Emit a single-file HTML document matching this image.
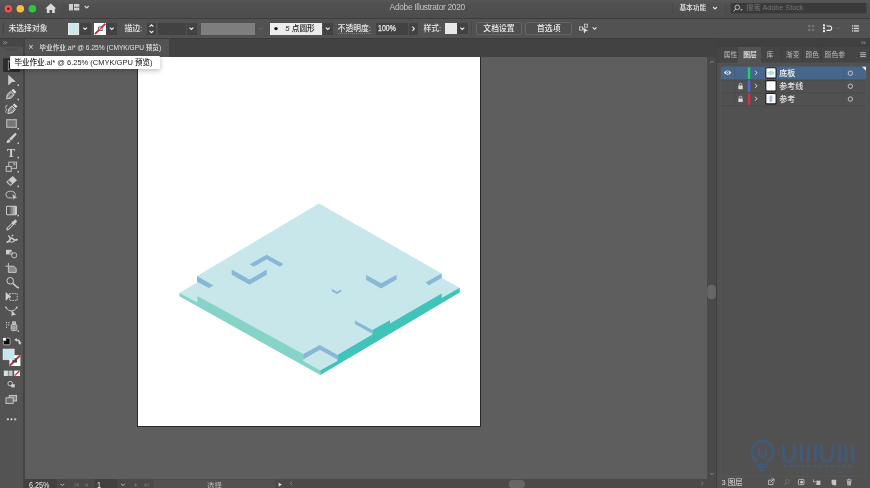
<!DOCTYPE html>
<html lang="zh-CN">
<head>
<meta charset="utf-8">
<title>Adobe Illustrator 2020</title>
<style>
html,body{margin:0;padding:0}
body{width:870px;height:488px;overflow:hidden;position:relative;background:#5e5e5e;
 font-family:"Liberation Sans","Noto Sans CJK SC",sans-serif;font-size:8px;line-height:10px;color:#dcdcdc}
div,span{position:absolute;box-sizing:border-box;white-space:nowrap}
svg{position:absolute;left:0;top:0;overflow:visible;filter:blur(0.35px)}
span{filter:blur(0.3px)}
#titlebar{left:0;top:0;width:870px;height:18px;background:linear-gradient(#575757,#505050 30%,#4d4d4d)}
#ctrlbar{left:0;top:17.8px;width:870px;height:21.4px;background:#525252;border-top:1px solid #3d3d3d;border-bottom:1px solid #3c3c3c}
#tabbar{left:0;top:39px;width:718px;height:17.9px;background:#424242}
#doctab{left:25px;top:39.4px;width:143.6px;height:17.5px;background:#535353}
#toolbar{left:0;top:39px;width:25px;height:449px;background:#535353;border-right:2px solid #434343}
#canvas{left:25px;top:56.9px;width:682px;height:422.1px;background:#5e5e5e}
#artboard{left:137.2px;top:56.9px;width:343.8px;height:369.8px;background:#fff;border:1.2px solid #2a2a2a;border-top:none;border-left-width:0.7px}
#vscroll{left:707px;top:56.9px;width:10px;height:422.1px;background:#4a4a4a}
#hbar{left:25px;top:479px;width:692px;height:9px;background:#4a4a4a}
#panel{left:716.3px;top:39px;width:153.7px;height:449px;background:#515151;border-left:1.9px solid #404040}
#phead{left:717px;top:39px;width:153px;height:7.6px;background:#404040}
#ptabs{left:717px;top:46.6px;width:153px;height:16px;background:#454545}
#ptabact{left:738.2px;top:46.6px;width:23px;height:16px;background:#535353}
.t{color:#e6e6e6;font-weight:500}
.dim{color:#9a9a9a}
.box{background:#424242}
.row{left:721px;width:145px;height:13px}
</style>
</head>
<body>
<div id="canvas"></div>
<div id="artboard"></div>
<div id="vscroll"></div>
<div id="hbar"></div>
<div id="titlebar"></div>
<div id="ctrlbar"></div>
<div id="tabbar"></div>
<div id="doctab"></div>
<div id="toolbar"></div>
<div id="panel"></div>
<div id="phead"></div>
<div id="ptabs"></div>
<div id="ptabact"></div>

<!-- artwork -->
<svg id="art" width="870" height="488" viewBox="0 0 870 488">
 <polygon fill="#c7e7eb" points="319,203.6 441.7,273.4 441.7,278 459.7,287.8 320.3,372 179.4,292.9 197,282.6 197,276"/>
 <polygon fill="#86d4c7" points="179.4,292.9 197.4,302.5 197.4,296.1 303.2,353.9 303.2,361 320.3,370.5 320.3,375.1 179.4,296.3"/>
 <polygon fill="#40c3b8" points="320.3,370.5 337.4,361 337.4,355 372.4,334.5 372.4,330.1 390,320.3 390,323.4 441.7,293.6 441.7,298 459.7,287.8 459.7,292.4 320.3,375.1"/>
 <g fill="#8bb7d7">
  <polygon points="197,276 213.4,285.5 208.9,288 197,281.8"/>
  <polygon points="249.7,264.3 266.6,254.7 283.5,264 279.9,266.7 266.6,259.3 253.8,266.7"/>
  <polygon points="231.7,269.6 249.5,279.6 266.8,269.6 266.8,274.7 249.5,284.7 231.7,274.7"/>
  <polygon points="331.7,289.1 336.9,291.8 341.3,289.5 341.3,291.5 336.9,294 331.7,291.2"/>
  <polygon points="366.2,275.1 381.2,283.3 396.6,274.8 396.6,279.4 381.2,288.4 366.2,279.9"/>
  <polygon points="441.7,273.4 441.7,278 429,285.2 425.4,282.6"/>
  <polygon points="354.9,320.6 372.4,330.1 372.4,334 371.5,333.2 354.9,324"/>
  <polygon points="303.2,353.9 319.8,345 337.4,354.8 337.4,359.4 319.8,349.8 303.2,359.4"/>
 </g>
</svg>

<!-- title bar -->
<svg width="870" height="18" viewBox="0 0 870 18">
 <circle cx="8.3" cy="8.7" r="3.8" fill="#f25056"/><circle cx="8.3" cy="8.7" r="1.3" fill="#7a0c10"/>
 <circle cx="20.3" cy="8.7" r="3.8" fill="#fbbd2e"/>
 <circle cx="32.4" cy="8.7" r="3.8" fill="#2bc840"/>
 <path d="M50.8 3.5 L56.3 8.6 H54.8 V12.9 H52.1 V10 H49.5 V12.9 H46.8 V8.6 H45.3 Z" fill="#dadada"/>
 <rect x="63.6" y="3" width="0.8" height="11" fill="#444" opacity="0.6"/>
 <g fill="#cfcfcf"><rect x="69" y="4" width="4" height="6.4"/><rect x="74" y="4" width="5.3" height="2.8"/><rect x="74" y="7.6" width="5.3" height="2.8"/></g>
 <path d="M84.7 6 L86.7 8 L88.7 6" fill="none" stroke="#d8d8d8" stroke-width="1.15"/>
 <rect x="672" y="3" width="0.8" height="11" fill="#444" opacity="0.6"/>
 <path d="M713 7 L715 9 L717 7" fill="none" stroke="#e0e0e0" stroke-width="1.1"/>
 <rect x="725.4" y="3" width="0.8" height="11" fill="#444" opacity="0.7"/>
 <rect x="730.7" y="3" width="135.7" height="10.4" fill="#3a3a3a"/>
 <circle cx="737.3" cy="7.3" r="2.3" fill="none" stroke="#c8c8c8" stroke-width="0.9"/>
 <path d="M735.7 9 L733.6 11.3" stroke="#c8c8c8" stroke-width="1"/>
 <path d="M740.2 9.2 h2.6 l-1.3 1.5 z" fill="#c8c8c8"/>
</svg>
<span id="title" style="left:389.6px;top:2.2px;color:#c4c4c4;font-size:8.4px;letter-spacing:-0.3px">Adobe Illustrator 2020</span>
<span id="basic" class="t" style="left:679.4px;top:2.6px;font-size:6.7px">基本功能</span>
<span id="search" style="left:746.2px;top:3px;font-size:7.2px;color:#767676">搜索 Adobe Stock</span>

<!-- control bar -->
<span class="t" style="left:8.5px;top:24.1px;font-size:7.8px">未选择对象</span>
<div style="left:67.5px;top:23px;width:11.7px;height:11.7px;background:#c8e8ec;border:0.5px solid #e8e8e8"></div>
<div class="box" style="left:79.6px;top:23px;width:11px;height:11.7px"></div>
<div style="left:94.2px;top:23px;width:11.7px;height:11.7px;background:#fff"></div>
<div class="box" style="left:106.3px;top:23px;width:11px;height:11.7px"></div>
<span class="t" style="left:124.5px;top:24.1px;font-size:7.8px">描边:</span>
<div class="box" style="left:147.2px;top:23px;width:9px;height:11.7px"></div>
<div class="box" style="left:157.6px;top:23px;width:28.3px;height:11.7px"></div>
<div class="box" style="left:186.6px;top:23px;width:10px;height:11.7px"></div>
<div style="left:200.6px;top:23px;width:54.4px;height:11.7px;background:#7e7e7e"></div>
<div style="left:270.1px;top:23px;width:52.1px;height:11.5px;background:#ececec"></div>
<div class="box" style="left:322.6px;top:23px;width:10.4px;height:11.5px"></div>
<span style="left:285.3px;top:24.1px;font-size:7.7px;color:#1c1c1c;font-weight:500"><i>5</i> 点圆形</span>
<span class="t" style="left:337.6px;top:24.1px;font-size:7.8px;border-bottom:0.5px dotted #7a7a7a;height:10.4px">不透明度:</span>
<div class="box" style="left:375.9px;top:23px;width:32.1px;height:11.7px"></div>
<span class="t" style="left:378.1px;top:23.2px;font-size:9px;transform:scaleX(0.775);transform-origin:0 0;color:#f0f0f0;-webkit-text-stroke:0.25px #f0f0f0">100%</span>
<div class="box" style="left:408.6px;top:23px;width:9.6px;height:11.7px"></div>
<span class="t" style="left:423.4px;top:24.1px;font-size:7.8px">样式:</span>
<div style="left:444.6px;top:23px;width:12px;height:11.4px;background:#e8e8e8"></div>
<div class="box" style="left:457px;top:23px;width:10.5px;height:11.4px"></div>
<div style="left:475.6px;top:21.8px;width:46.7px;height:13.4px;border:1px solid #656565;border-radius:2px;background:#4f4f4f"></div>
<div style="left:525.2px;top:21.8px;width:47.2px;height:13.4px;border:1px solid #656565;border-radius:2px;background:#4f4f4f"></div>
<span class="t" style="left:475.6px;top:23.8px;width:46.7px;text-align:center;font-size:7.8px;font-weight:500;color:#ececec">文档设置</span>
<span class="t" style="left:525.2px;top:23.8px;width:47.2px;text-align:center;font-size:7.8px;font-weight:500;color:#ececec">首选项</span>
<svg width="870" height="40" viewBox="0 0 870 40">
 <rect x="2.8" y="22.6" width="0.8" height="12" fill="#404040"/>
 <g fill="none" stroke="#ececec" stroke-width="1.15">
  <path d="M83.2 27.6 L85.1 29.5 L87 27.6"/>
  <path d="M109.9 27.6 L111.8 29.5 L113.7 27.6"/>
  <path d="M149.6 26.6 L151.5 24.8 L153.4 26.6"/>
  <path d="M149.6 30.8 L151.5 32.6 L153.4 30.8"/>
  <path d="M189.5 27.6 L191.4 29.5 L193.3 27.6"/>
  <path d="M325.9 27.6 L327.8 29.5 L329.7 27.6"/>
  <path d="M412.4 26.6 L414.3 28.7 L412.4 30.8"/>
  <path d="M460.4 27.6 L462.3 29.5 L464.2 27.6"/>
  <path d="M592.7 27.4 L594.6 29.3 L596.5 27.4"/>
 </g>
 <path d="M258.7 27.6 L260.6 29.5 L262.5 27.6" fill="none" stroke="#6e6e6e" stroke-width="1"/>
 <path d="M95 34 L105.2 23.8" stroke="#e0202c" stroke-width="1.7"/>
 <rect x="98.6" y="27" width="3.6" height="3.6" fill="#fff" stroke="#555" stroke-width="0.8"/>
 <path d="M95 34 L105.2 23.8" stroke="#e0202c" stroke-width="1.2" opacity="0.9"/>
 <circle cx="276" cy="28.6" r="1.7" fill="#111"/>
 <rect x="471" y="22" width="1" height="13" fill="#474747"/>
 <g fill="none" stroke="#d4d4d4" stroke-width="0.8"><rect x="584.4" y="24.2" width="3" height="3"/><rect x="579.4" y="27" width="3" height="3"/></g>
 <path d="M583 27.4 L588.2 30.8 L585.6 31.2 L584.2 33.4 Z" fill="#e0e0e0"/>
 <g fill="#747474"><rect x="808" y="24.9" width="2.3" height="2.3"/><rect x="811.9" y="24.9" width="2.3" height="2.3"/><rect x="808" y="28.8" width="2.3" height="2.3"/><rect x="811.9" y="28.8" width="2.3" height="2.3"/></g>
 <g fill="#f0f0f0"><rect x="823" y="24.3" width="2" height="2"/><rect x="823" y="27.2" width="2" height="2"/><rect x="823" y="30.1" width="2" height="2"/></g>
 <path d="M826.5 26 h3 a2.2 2.2 0 0 1 0 4.4 h-3" fill="none" stroke="#f0f0f0" stroke-width="1.1"/>
 <path d="M836.3 27.2 L838 28.9 L839.7 27.2" fill="none" stroke="#6e6e6e" stroke-width="0.9"/>
 <g fill="#d8d8d8"><rect x="852" y="25.3" width="1.3" height="1.3"/><rect x="854" y="25.3" width="5" height="1.3"/><rect x="852" y="27.8" width="1.3" height="1.3"/><rect x="854" y="27.8" width="5" height="1.3"/><rect x="852" y="30.3" width="1.3" height="1.3"/><rect x="854" y="30.3" width="5" height="1.3"/></g>
</svg>


<!-- right panel -->
<svg width="870" height="488" viewBox="0 0 870 488">
 <path d="M861.6 41.4 l1.3 1.3 l-1.3 1.3 M863.8 41.4 l1.3 1.3 l-1.3 1.3" fill="none" stroke="#b8b8b8" stroke-width="0.7"/>
 <g fill="#3e3e3e" opacity="0.7"><rect x="781" y="47" width="0.8" height="15"/><rect x="802" y="47" width="0.8" height="15"/><rect x="820.6" y="47" width="0.8" height="15"/><rect x="846.2" y="47" width="0.8" height="15"/></g>
 <g fill="#c4c4c4"><rect x="860.2" y="52.4" width="5.6" height="0.9"/><rect x="860.2" y="54.3" width="5.6" height="0.9"/><rect x="860.2" y="56.2" width="5.6" height="0.9"/></g>
 <rect x="720.6" y="63" width="146" height="413.2" fill="none" stroke="#595959" stroke-width="0.6"/>
 <rect x="154" y="479.6" width="121" height="8.4" fill="#525252"/>
 <!-- rows -->
 <rect x="721" y="66.6" width="145" height="13.1" rx="1" fill="#47678a"/>
 <rect x="721" y="79.7" width="145" height="0.6" fill="#474747"/>
 <rect x="721" y="92.6" width="145" height="0.6" fill="#474747"/>
 <rect x="721" y="105.5" width="145" height="0.6" fill="#474747"/>
 <rect x="734.6" y="66.7" width="0.6" height="39" fill="#444" opacity="0.45"/>
 <rect x="843.6" y="66.7" width="0.6" height="39" fill="#444" opacity="0.45"/>
 <!-- eye -->
 <path d="M723.8 72.6 q3.8 -4.4 7.6 0 q-3.8 4.4 -7.6 0 z" fill="#e6e6e6"/>
 <circle cx="727.6" cy="72.6" r="1.5" fill="#47678a"/><circle cx="727.6" cy="72.6" r="0.6" fill="#e6e6e6"/>
 <!-- colour bars -->
 <rect x="747.8" y="67.4" width="2.4" height="11.6" fill="#22d160"/>
 <rect x="747.8" y="80.4" width="2.4" height="11.6" fill="#4c68dc"/>
 <rect x="747.8" y="93.3" width="2.4" height="11.6" fill="#d8303a"/>
 <!-- chevrons -->
 <g fill="none" stroke="#e0e0e0" stroke-width="1">
  <path d="M755.1 70.8 l1.9 2 l-1.9 2"/><path d="M755.1 83.8 l1.9 2 l-1.9 2"/><path d="M755.1 96.7 l1.9 2 l-1.9 2"/>
 </g>
 <!-- locks -->
 <g fill="#d6d6d6">
  <rect x="738.3" y="85.6" width="4.4" height="3.6" rx="0.4"/><rect x="738.3" y="98.5" width="4.4" height="3.6" rx="0.4"/>
 </g>
 <g fill="none" stroke="#d6d6d6" stroke-width="0.8">
  <path d="M739.2 85.8 v-1.2 a1.3 1.3 0 0 1 2.6 0 v1.2"/><path d="M739.2 98.7 v-1.2 a1.3 1.3 0 0 1 2.6 0 v1.2"/>
 </g>
 <!-- thumbs -->
 <g fill="#fdfdfd" stroke="#1c1c1c" stroke-width="1.1">
  <rect x="765.8" y="67.7" width="10.3" height="10.4" rx="1.2"/><rect x="765.8" y="80.6" width="10.3" height="10.4" rx="1.2"/><rect x="765.8" y="93.5" width="10.3" height="10.4" rx="1.2"/>
 </g>
 <polygon points="766.8,72.9 770.9,70.3 775,72.9 770.9,75.6" fill="#b4dee7"/>
 <rect x="769.4" y="95.4" width="3" height="6.6" rx="1" fill="#b4bfe2"/>
 <!-- target circles -->
 <g fill="none" stroke="#dadada" stroke-width="0.8"><circle cx="850.4" cy="73.2" r="2.2"/><circle cx="850.4" cy="86.2" r="2.2"/><circle cx="850.4" cy="99.1" r="2.2"/></g>
 <path d="M862 66.7 h4 v4 z" fill="#f0f0f0"/>
 <!-- panel bottom -->
 <g fill="none" stroke="#d0d0d0" stroke-width="0.8">
  <path d="M771.6 480.2 h-3 v4.4 h4.4 v-2.6 M770.4 482.6 l3.4 -3.4 M771.4 479 h2.6 v2.6"/>
  <rect x="798.4" y="479.4" width="5.6" height="5.2" rx="1"/>
 </g>
 <circle cx="801.6" cy="482.2" r="1.4" fill="#d0d0d0"/>
 <g fill="none" stroke="#757575" stroke-width="0.8"><circle cx="787.4" cy="481.4" r="1.9"/><path d="M786 483 l-2 2"/></g>
 <g fill="#c4c4c4"><rect x="816.4" y="480.6" width="4" height="4.4"/><path d="M831.6 479.8 h4.6 v5.4 h-3.2 l-1.4 -1.4 z"/>
  <path d="M846.8 481 h4.6 l-0.5 4.6 h-3.6 z" opacity="0.8"/><rect x="846.2" y="479.6" width="5.8" height="0.8"/><rect x="848" y="478.8" width="2.2" height="0.8"/></g>
 <path d="M813.4 479.4 v2.4 h2.4" fill="none" stroke="#c4c4c4" stroke-width="0.8"/>
 <!-- scroll arrows -->
 <g fill="none" stroke="#8a8a8a" stroke-width="0.9">
  <path d="M710 63 l1.9 -1.9 l1.9 1.9"/><path d="M710.2 473 l1.8 1.8 l1.8 -1.8"/>
  <path d="M701.4 481.6 l1.6 1.8 l-1.6 1.8"/><path d="M292 481.6 l-1.6 1.8 l1.6 1.8"/>
 </g>
 <rect x="707.6" y="285" width="8" height="14" rx="4" fill="#666" stroke="#707070" stroke-width="0.5"/>
 <rect x="509" y="480.2" width="15.6" height="8" rx="4" fill="#666" stroke="#707070" stroke-width="0.5"/>
 <!-- status bar -->
 <rect x="25" y="479" width="31.8" height="9" fill="#414141"/><rect x="58" y="479" width="9" height="9" fill="#484848"/><rect x="118.5" y="479" width="9.5" height="9" fill="#484848"/>
 <rect x="94.3" y="479" width="23.1" height="9" fill="#414141"/>
 <g fill="none" stroke="#d0d0d0" stroke-width="0.9"><path d="M60.5 483.8 l1.8 1.8 l1.8 -1.8"/><path d="M121.2 483.8 l1.8 1.8 l1.8 -1.8"/></g>
 <g fill="#6c6c6c">
  <path d="M78.6 483 v4 l-3 -2 z"/><rect x="74.6" y="483" width="0.8" height="4"/>
  <path d="M87.6 483 v4 l-3 -2 z"/>
  <path d="M134.6 483 v4 l3 -2 z"/>
  <path d="M144.6 483 v4 l3 -2 z"/><rect x="147.8" y="483" width="0.8" height="4"/>
 </g>
 <path d="M278.6 482.4 v4.4 l3.2 -2.2 z" fill="#d8d8d8"/>
</svg>
<span style="left:723.8px;top:50.2px;font-size:6.8px;color:#bdbdbd">属性</span>
<span style="left:743.2px;top:50.2px;font-size:6.8px;color:#f4f4f4;font-weight:500">图层</span>
<span style="left:766.6px;top:50.2px;font-size:6.8px;color:#bdbdbd">库</span>
<span style="left:786px;top:50.2px;font-size:6.8px;color:#bdbdbd">渐变</span>
<span style="left:805.4px;top:50.2px;font-size:6.8px;color:#bdbdbd">颜色</span>
<span style="left:824.6px;top:50.2px;font-size:6.8px;color:#bdbdbd">颜色参</span>
<span style="left:779.2px;top:69.2px;font-size:8px;color:#f4f4f4;font-weight:500">底板</span>
<span style="left:779.2px;top:82.2px;font-size:8px;color:#e6e6e6;font-weight:500">参考线</span>
<span style="left:779.2px;top:95.1px;font-size:8px;color:#e6e6e6;font-weight:500">参考</span>
<span style="left:721.4px;top:477.8px;font-size:7.5px;color:#dedede">3 图层</span>
<span style="left:28.8px;top:480.4px;font-size:9px;color:#ececec;transform:scaleX(0.8);transform-origin:0 0">6.25%</span>
<span style="left:96.8px;top:480.4px;font-size:9px;color:#ececec;transform:scaleX(0.8);transform-origin:0 0">1</span>
<span style="left:207px;top:481.2px;font-size:7.4px;color:#bcbcbc">选择</span>

<!-- watermark -->
<svg width="870" height="488" viewBox="0 0 870 488" opacity="0.56" style="filter:blur(0.7px)">
 <g fill="none" stroke="#36629a" stroke-width="2.5" stroke-linecap="round">
  <path d="M757.2 461.2 a10.8 10.8 0 1 1 10.6 0"/>
  <path d="M758.8 448.6 v4.8 a3.6 3.6 0 0 0 7.2 0 v-4.8" stroke-width="2.3"/>
  <path d="M757.4 464.6 h10 M758.2 467.6 h8.4 M760.2 470.4 h4.4" stroke-width="2"/>
 </g>
 <g font-family="'Liberation Sans',sans-serif" font-size="24.6" fill="#36629a" stroke="#36629a" stroke-width="0.5" stroke-linejoin="round">
  <text transform="translate(781.1 461.6) scale(0.915 1)">U</text>
  <text transform="translate(797.9 461.6)">I</text>
  <text transform="translate(805.2 461.6)">I</text>
  <text transform="translate(812 461.6)">I</text>
  <text transform="translate(818.6 461.6) scale(0.95 1)">U</text>
  <text transform="translate(836.4 461.6)">I</text>
  <text transform="translate(842.6 461.6)">I</text>
  <text transform="translate(849.4 461.6)">I</text>
 </g>
 <path d="M783.4 466.2 H853.6" fill="none" stroke="#36629a" stroke-width="2.2" stroke-dasharray="3.6 2.3" opacity="0.85"/>
</svg>

<!-- toolbar -->
<svg width="25" height="488" viewBox="0 0 25 488">
 <rect x="0" y="39" width="23" height="7.6" fill="#464646"/>
 <path d="M3.2 41.2 l1.5 1.5 l-1.5 1.5 M5.4 41.2 l1.5 1.5 l-1.5 1.5" fill="none" stroke="#b4b4b4" stroke-width="0.7"/>
 <rect x="5.4" y="48.6" width="11.6" height="0.8" fill="#464646"/><rect x="5.4" y="50.4" width="11.6" height="0.6" fill="#4a4a4a"/>
 <rect x="3" y="58.3" width="17.2" height="13.6" rx="1.2" fill="#2d2d2d"/>
 <path d="M8.4 60.4 v9.6 l2.4 -2.2 h3.6 z" fill="#0c0c0c" stroke="#c8c8c8" stroke-width="0.7"/>
 <g fill="#cdcdcd">
  <!-- direct selection -->
  <path d="M8.2 74.8 L15.7 81.6 L11.6 82.3 L8.9 85 L8.2 84.8 Z"/>
  <!-- pen -->
  <path d="M6.5 98.9 L7.3 94.3 L10.7 91.3 L14.2 94.7 L11.2 98.1 Z" fill="#9a9a9a" stroke="#d8d8d8" stroke-width="0.9"/>
  <path d="M11.5 90.4 l1.7 -1.6 l3.2 3.2 l-1.6 1.7 z" fill="#dcdcdc"/>
  <!-- curvature pen -->
  <path d="M7.9 113.5 L8.7 108.9 L12 105.9 L15.4 109.3 L12.5 112.7 Z" fill="#9a9a9a" stroke="#d8d8d8" stroke-width="0.9"/>
  <path d="M12.8 105 l1.6 -1.6 l3.1 3.1 l-1.6 1.6 z" fill="#dcdcdc"/>
  <!-- brush -->
  <path d="M15.2 132.8 l1.6 1.4 l-5.6 6.4 l-2.1 -1.8 z"/>
  <path d="M6.4 143 q0.2 -3.2 2.5 -3.8 q2.6 1.8 0.8 3.1 q-1.3 0.8 -3.3 0.7 z"/>
  <!-- eraser -->
  <path d="M12.7 176.1 L17 180.2 L10.5 186.1 L6.1 181.9 Z"/>
  <!-- shape builder -->
  <rect x="6" y="249.8" width="5.6" height="4.6"/>
  <!-- dots -->
  <rect x="17.5" y="84.4" width="1.5" height="1.5"/><rect x="17.5" y="98.8" width="1.5" height="1.5"/>
  <rect x="17.5" y="128" width="1.5" height="1.5"/><rect x="17.5" y="142.4" width="1.5" height="1.5"/><rect x="17.5" y="156.8" width="1.5" height="1.5"/>
  <rect x="17.5" y="171" width="1.5" height="1.5"/><rect x="17.5" y="185.6" width="1.5" height="1.5"/><rect x="17.5" y="214.8" width="1.5" height="1.5"/>
  <rect x="17.5" y="286.8" width="1.5" height="1.5"/><rect x="17.5" y="330.4" width="1.5" height="1.5"/>
  <circle cx="7.9" cy="419.3" r="1.15"/><circle cx="11.5" cy="419.3" r="1.15"/><circle cx="15.2" cy="419.3" r="1.15"/>
  <!-- symbol sprayer dots -->
  <rect x="6" y="322" width="1.1" height="1.1"/><rect x="8.2" y="322" width="1.1" height="1.1"/><rect x="6" y="324.4" width="1.1" height="1.1"/><rect x="8.2" y="324.4" width="1.1" height="1.1"/><rect x="6" y="326.8" width="1.1" height="1.1"/>
 </g>
 <path d="M7.6 97.8 l3 -3" stroke="#4a4a4a" stroke-width="0.8"/><circle cx="11" cy="94.4" r="0.8" fill="#4a4a4a"/>
 <path d="M9 112.4 l2.9 -2.9" stroke="#4a4a4a" stroke-width="0.8"/><circle cx="12.3" cy="109" r="0.8" fill="#4a4a4a"/>
 <path d="M10.4 184.8 L7.4 181.9 L9.2 180.3 L12.2 183.2 Z" fill="#535353" opacity="0.8"/>
 <text x="7.1" y="156.6" font-family="'Liberation Serif',serif" font-weight="bold" font-size="12.4" fill="#d0d0d0">T</text>
 <g fill="none" stroke="#cdcdcd" stroke-width="1">
  <path d="M7.6 105.2 q-2.6 0.2 -1.8 2.4 q1.6 2.6 -0.2 4 q-0.6 0.6 0.8 1.2" stroke-width="0.8"/>
  <rect x="6.7" y="119.7" width="9.6" height="7.6" fill="#767676" stroke="#b4b4b4" stroke-width="1.2"/>
  <rect x="8.8" y="162.1" width="7.8" height="6.2" stroke-width="0.9"/><path d="M12.4 166 l2.6 -2.4 m-1.8 0 h1.8 v1.8" stroke-width="0.7"/><rect x="6.2" y="166.5" width="5" height="4.8" stroke-width="0.9" fill="#535353"/>
  <ellipse cx="10.6" cy="194.6" rx="4.6" ry="3.4" stroke-width="0.9"/>
  <g stroke="none"><rect x="6.6" y="206.2" width="2" height="8.5" fill="#3c3c3c"/><rect x="8.6" y="206.2" width="2" height="8.5" fill="#5e5e5e"/><rect x="10.6" y="206.2" width="2" height="8.5" fill="#848484"/><rect x="12.6" y="206.2" width="2" height="8.5" fill="#aaa"/><rect x="14.6" y="206.2" width="1.8" height="8.5" fill="#cecece"/></g><rect x="6.6" y="206.2" width="9.8" height="8.5" rx="0.8" stroke-width="1.1"/>
  <path d="M13.4 223.2 l-5.8 5.8" stroke-width="2.8" stroke-linecap="round"/><path d="M13 223.6 l-5 5" stroke="#535353" stroke-width="1.1" stroke-linecap="round"/><path d="M13.4 223.2 l2 -2" stroke-width="3" stroke-linecap="round"/><path d="M12.2 221.4 l3.2 3.2" stroke-width="1"/>
  <path d="M6.6 242.4 q2.8 -0.8 3.6 -3.2 q1 -2.2 2.6 -0.4 q1.8 2.4 4.8 0.4" stroke-width="1.7"/>
  <path d="M8 235.6 q1.6 0.4 2 2.4 M11.6 236 l1.6 -0.8" stroke-width="1.3"/>
  <path d="M9 241.6 q3 1.4 5.6 -0.4" stroke-width="1"/>
  <circle cx="11.2" cy="253.2" r="2" stroke="none" fill="#8c8c8c"/><circle cx="14.2" cy="255.3" r="2.6" stroke-width="0.9"/>
  <path d="M8.4 266.2 h5.4 l2.4 2.2 v4 h-7.8 z" stroke-width="0.9" fill="#8a8a8a"/><path d="M8.4 262.8 v3.4 M5.4 266.2 h3" stroke-width="0.9"/>
  <circle cx="10.2" cy="280.8" r="3.3"/><path d="M12.8 283.4 l5 4.4" stroke-width="1.5"/>
  <rect x="9.6" y="293.6" width="7.6" height="6.8" stroke-width="0.9" stroke-dasharray="1.6 0.9"/>
  <path d="M5.8 307.6 q5.6 7 11.2 0" stroke-width="1"/>
  <rect x="11.2" y="324.4" width="5.6" height="6.2" rx="1.3" stroke-width="0.9" fill="#8e8e8e"/><rect x="12.6" y="321.8" width="2.8" height="2.4" stroke-width="0.8" fill="#b0b0b0"/>
  <circle cx="13.7" cy="327.8" r="1.2" stroke-width="0.6"/>
  <rect x="9.2" y="395.4" width="7.4" height="5.6" stroke-width="0.9" fill="#8a8a8a"/><rect x="6" y="397.8" width="7.2" height="5.6" stroke-width="0.9" fill="#6a6a6a"/>
  <circle cx="10.2" cy="383.6" r="2.3" stroke-width="0.9"/>
 </g>
 <rect x="11.2" y="384.2" width="3.6" height="3.2" fill="#cdcdcd"/>
 <path d="M12.3 193.6 L17.5 198 L14.8 198.3 L13.4 200.4 Z" fill="#d4d4d4" stroke="#535353" stroke-width="0.5"/>
 <path d="M5.7 292 L11.6 297.2 L8.5 297.7 L6.4 300.4 L5.7 300.2 Z" fill="#d0d0d0"/>
 <path d="M11.6 310.2 v6.2 l1.6 -1.3 h2.8 z" fill="#cdcdcd"/>
 <circle cx="6" cy="307.4" r="0.9" fill="#cdcdcd"/><circle cx="16.8" cy="307.4" r="0.9" fill="#cdcdcd"/>
 <!-- default fill/stroke + swap -->
 <rect x="3.4" y="338.2" width="6.6" height="6.6" rx="1" fill="#0a0a0a" stroke="#d8d8d8" stroke-width="0.7"/>
 <rect x="2.6" y="337.4" width="3.6" height="3.6" fill="#f4f4f4" stroke="#222" stroke-width="0.5"/>
 <path d="M16.2 339.9 q3.4 -0.2 3.6 3.2" fill="none" stroke="#d4d4d4" stroke-width="1.5"/>
 <path d="M16.8 337.9 v3.8 l-2.4 -1.9 z M17.9 342.4 h3.8 l-1.9 2.4 z" fill="#d4d4d4"/>
 <!-- fill / stroke swatches -->
 <rect x="9.4" y="355.2" width="11" height="10.8" fill="#fff"/>
 <path d="M9.8 365.6 L20 355.6" stroke="#d4202c" stroke-width="2"/>
 <rect x="12.4" y="358.2" width="4.6" height="4.4" fill="#4a4a4a"/>
 <rect x="3" y="349" width="11.2" height="10.8" fill="#c6e6eb" stroke="#e8f4f6" stroke-width="0.5"/>
 <!-- colour / gradient / none -->
 <rect x="3.8" y="370.6" width="4.1" height="5.4" fill="#c8e8ec"/>
 <rect x="8.5" y="370.6" width="4.1" height="5.4" fill="#c4c4c4"/>
 <rect x="14.2" y="370.6" width="5.8" height="5.4" fill="#fff"/>
 <path d="M14.8 375.6 L19.4 371" stroke="#d4202c" stroke-width="1.3"/>
</svg>

<!-- doc tab -->
<span class="t" style="left:28.6px;top:42.4px;font-size:8.4px;color:#e0e0e0">×</span>
<span id="tabt" class="t" style="left:39.5px;top:43px;font-size:6.62px;color:#e4e4e4">毕业作业.ai* @ 6.25% (CMYK/GPU 预览)</span>

<!-- tooltip -->
<div style="left:10px;top:56px;width:149.8px;height:12.7px;background:#fff;box-shadow:0 1.5px 5px rgba(0,0,0,.28);border-radius:1px"></div>
<span id="tipt" style="left:14.4px;top:57.7px;font-size:7.5px;color:#1c1c1c;font-weight:500">毕业作业.ai* @ 6.25% (CMYK/GPU 预览)</span>
</body>
</html>
